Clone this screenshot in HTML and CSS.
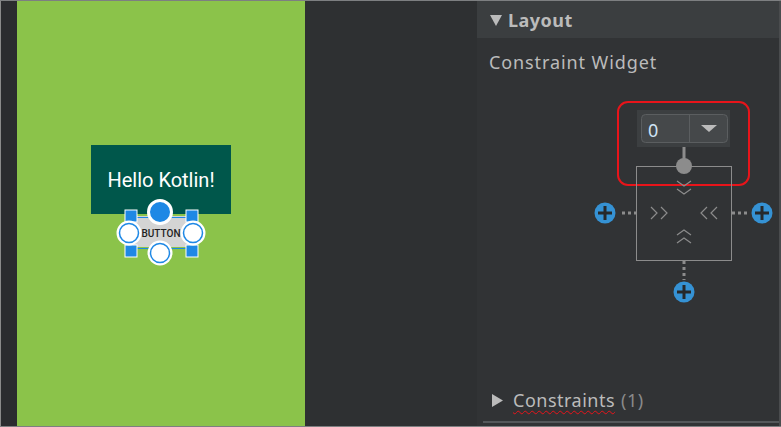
FILE: index.html
```html
<!DOCTYPE html>
<html>
<head>
<meta charset="utf-8">
<link rel="stylesheet" href="styles.css">
</head>
<body>
<div class="app">
  <div class="topline"></div>
  <div class="main">
    <div class="gutter"></div>
    <div class="canvas">
      <div class="hello">Hello Kotlin!</div>
      <svg class="selection" width="110" height="75" viewBox="0 0 110 75">
        <rect x="29" y="21" width="64" height="31" fill="#d4d4d4"/>
        <rect x="30.5" y="22.5" width="62" height="31" fill="none" stroke="#1e88e5" stroke-width="1"/>
        <text x="61" y="42" text-anchor="middle" class="btntext">BUTTON</text>
        <rect x="25" y="15" width="12" height="12" fill="#1e88e5" stroke="#fff" stroke-width="1"/>
        <rect x="86" y="15" width="12" height="12" fill="#1e88e5" stroke="#fff" stroke-width="1"/>
        <rect x="25" y="50" width="12" height="12" fill="#1e88e5" stroke="#fff" stroke-width="1"/>
        <rect x="86" y="50" width="12" height="12" fill="#1e88e5" stroke="#fff" stroke-width="1"/>
        <circle cx="60" cy="17" r="11.5" fill="#1e88e5" stroke="#fff" stroke-width="3"/>
        <circle cx="29" cy="38" r="11" fill="#fff" stroke="#fff" stroke-width="3"/>
        <circle cx="29" cy="38" r="9.5" fill="#fff" stroke="#1e88e5" stroke-width="1.5"/>
        <circle cx="93" cy="38" r="11" fill="#fff" stroke="#fff" stroke-width="3"/>
        <circle cx="93" cy="38" r="9.5" fill="#fff" stroke="#1e88e5" stroke-width="1.5"/>
        <circle cx="60" cy="58" r="11" fill="#fff" stroke="#fff" stroke-width="3"/>
        <circle cx="60" cy="58" r="9.5" fill="#fff" stroke="#1e88e5" stroke-width="1.5"/>
      </svg>
    </div>
    <div class="blank"></div>
    <div class="panel">
      <div class="header">
        <svg class="tri" width="12" height="12" viewBox="0 0 12 12"><polygon points="0,1 12,1 6,12" fill="#bbbbbb"/></svg>
        <span class="htitle">Layout</span>
      </div>
      <div class="wtitle">Constraint Widget</div>
      <svg class="widget" width="302" height="210" viewBox="0 0 302 210">
        <rect x="141" y="7" width="131" height="83" rx="10" fill="none" stroke="#e8141a" stroke-width="2"/>
        <rect x="160" y="15" width="93" height="37" fill="#3c3f41"/>
        <rect x="164.5" y="19.5" width="86" height="28" rx="4" fill="#45484a" stroke="#5b5e60" stroke-width="1"/>
        <line x1="212.5" y1="20" x2="212.5" y2="47" stroke="#5b5e60" stroke-width="1"/>
        <text x="171" y="42" class="zero">0</text>
        <polygon points="224,30 240,30 232,37" fill="#bbbbbb"/>
        <line x1="207" y1="52" x2="207" y2="70" stroke="#8c8c8c" stroke-width="3"/>
        <rect x="159.5" y="71.5" width="95" height="94" fill="none" stroke="#8c8c8c" stroke-width="1"/>
        <circle cx="207" cy="71" r="8" fill="#8c8c8c"/>
        <g fill="none" stroke="#8c8c8c" stroke-width="1.2">
          <polyline points="200,86 207,91 214,86"/>
          <polyline points="200,94 207,99 214,94"/>
          <polyline points="200,140 207,135 214,140"/>
          <polyline points="200,148 207,143 214,148"/>
          <polyline points="174,112 180,118 174,124"/>
          <polyline points="184,112 190,118 184,124"/>
          <polyline points="230,112 224,118 230,124"/>
          <polyline points="240,112 234,118 240,124"/>
        </g>
        <g stroke="#8c8c8c" stroke-width="3" stroke-dasharray="3 3">
          <line x1="145" y1="118" x2="160" y2="118"/>
          <line x1="255" y1="118" x2="272" y2="118"/>
          <line x1="207" y1="166" x2="207" y2="185"/>
        </g>
        <g>
          <circle cx="128" cy="118" r="10.5" fill="#3592d4"/>
          <circle cx="285" cy="118" r="10.5" fill="#3592d4"/>
          <circle cx="207" cy="197" r="10.5" fill="#3592d4"/>
        </g>
        <g stroke="#26292b" stroke-width="3">
          <line x1="121" y1="118" x2="135" y2="118"/><line x1="128" y1="111" x2="128" y2="125"/>
          <line x1="278" y1="118" x2="292" y2="118"/><line x1="285" y1="111" x2="285" y2="125"/>
          <line x1="200" y1="197" x2="214" y2="197"/><line x1="207" y1="190" x2="207" y2="204"/>
        </g>
      </svg>
      <div class="spacer"></div>
      <div class="crow">
        <svg class="tri2" width="11" height="13" viewBox="0 0 11 13"><polygon points="0,0 11,6.5 0,13" fill="#bbbbbb"/></svg>
        <span class="ctitle">Constraints</span>
        <span class="ccount">(1)</span>
      </div>
      <div class="sep"></div>
    </div>
  </div>
  <div class="bottomline"></div>
</div>
</body>
</html>
```
FILE: styles.css
```css
html, body {
  margin: 0;
  padding: 0;
}
body {
  width: 781px;
  height: 427px;
  overflow: hidden;
  background: #2b2d30;
  font-family: "Noto Sans", "Open Sans", sans-serif;
}
.app {
  width: 781px;
  height: 427px;
  display: flex;
  flex-direction: column;
}
.topline {
  height: 1px;
  background: #7d7f81;
  flex-shrink: 0;
}
.main {
  flex: 1;
  display: flex;
  flex-direction: row;
  min-height: 0;
}
.gutter {
  width: 16px;
  flex-shrink: 0;
  background: #2b2c2f;
  border-left: 1px solid #8a8a8a;
}
.canvas {
  width: 288px;
  flex-shrink: 0;
  background: #8bc34a;
  position: relative;
}
.hello {
  position: absolute;
  left: 74px;
  top: 144px;
  width: 140px;
  height: 69px;
  background: #00574b;
  color: #ffffff;
  font-family: Roboto, sans-serif;
  font-size: 20px;
  display: flex;
  align-items: center;
  justify-content: center;
}
.selection {
  position: absolute;
  left: 83px;
  top: 194px;
}
.btntext {
  font-family: Roboto, sans-serif;
  font-size: 10px;
  font-weight: 500;
  fill: #222;
}
.blank {
  width: 172px;
  flex-shrink: 0;
  background: #2e3032;
}
.panel {
  flex: 1;
  min-width: 0;
  background: #313335;
  display: flex;
  flex-direction: column;
  border-right: 2px solid #4a4c4e;
}
.header {
  height: 37px;
  flex-shrink: 0;
  background: #3b3e40;
  display: flex;
  align-items: center;
  padding-left: 13px;
  gap: 6px;
  color: #bbbbbb;
}
.tri {
  display: block;
}
.htitle {
  font-weight: bold;
  font-size: 18px;
  letter-spacing: 0.5px;
}
.wtitle {
  height: 57px;
  flex-shrink: 0;
  box-sizing: border-box;
  padding: 12px 0 0 12px;
  color: #bbbbbb;
  font-size: 18px;
  letter-spacing: 0.9px;
}
.widget {
  display: block;
  flex-shrink: 0;
}
.zero {
  font-family: "Noto Sans", sans-serif;
  font-size: 18px;
  fill: #cfe3f5;
}
.spacer {
  flex: 1;
}
.crow {
  height: 30px;
  flex-shrink: 0;
  display: flex;
  align-items: center;
  padding-left: 15px;
  color: #bbbbbb;
  font-size: 18px;
  letter-spacing: 0.5px;
}
.tri2 {
  display: block;
  margin-right: 10px;
}
.ctitle {
  text-decoration: underline wavy #e8141a;
  text-decoration-thickness: 1px;
  text-underline-offset: 3px;
}
.ccount {
  color: #8a8a8a;
  margin-left: 6px;
}
.sep {
  height: 2px;
  flex-shrink: 0;
  margin: 6px 0 3px 6px;
  background: #54575a;
}
.bottomline {
  height: 1px;
  flex-shrink: 0;
  background: #7d7f81;
}
```
